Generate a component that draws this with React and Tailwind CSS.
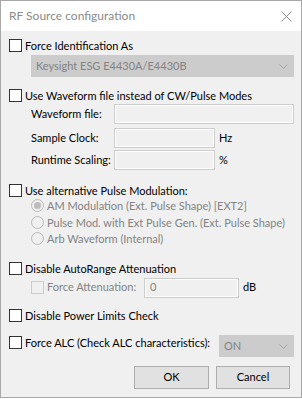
import React from "react";

const FONT = { fontFamily: 'Lato, "Liberation Sans", sans-serif' };

function Check({ disabled }) {
  return (
    <span
      className={`w-[13px] h-[13px] shrink-0 border ${
        disabled ? "border-[#cccccc] bg-[#f0f0f0]" : "border-[#333333] bg-white"
      }`}
    />
  );
}

function Radio({ checked }) {
  return (
    <span className="w-[13px] h-[13px] shrink-0 rounded-full border border-[#bcbcbc] bg-[#f0f0f0] flex items-center justify-center">
      {checked && <span className="w-[7px] h-[7px] rounded-full bg-[#bcbcbc]" />}
    </span>
  );
}

function CheckRow({ label, className = "" }) {
  return (
    <div className={`flex items-center h-[13px] gap-[3px] ${className}`}>
      <Check />
      <span className="text-[11px] leading-[13px] text-black whitespace-nowrap">{label}</span>
    </div>
  );
}

function Chevron() {
  return (
    <svg width="9" height="5" viewBox="0 0 9 5" className="shrink-0">
      <path d="M0.5 0.5 L4.5 4.5 L8.5 0.5" fill="none" stroke="#a8a8a8" strokeWidth="1" />
    </svg>
  );
}

function Combo({ value, className = "" }) {
  return (
    <div
      className={`h-[22px] flex items-center justify-between bg-[#cccccc] border border-[#cccccc] pl-[4px] pr-[5px] ${className}`}
    >
      <span className="text-[11px] text-[#838383] whitespace-nowrap">{value}</span>
      <Chevron />
    </div>
  );
}

function Field({ value = "", className = "" }) {
  return (
    <div
      className={`h-[20px] shrink-0 border border-[#cccccc] shadow-[inset_0_0_0_1px_#ffffff] bg-[#f0f0f0] flex items-center pl-[5px] text-[11px] text-[#838383] ${className}`}
    >
      {value}
    </div>
  );
}

function FieldRow({ label, unit, wide, className = "" }) {
  return (
    <div className={`flex items-center h-[20px] pl-[22px] ${className}`}>
      <span className="w-[83px] shrink-0 text-[11px] text-black whitespace-nowrap">{label}</span>
      <Field className={wide ? "w-[180px]" : "w-[101px]"} />
      {unit && <span className="ml-[4px] text-[11px] text-black">{unit}</span>}
    </div>
  );
}

function RadioRow({ label, checked, className = "" }) {
  return (
    <div className={`flex items-center h-[13px] gap-[3px] pl-[22px] ${className}`}>
      <Radio checked={checked} />
      <span className="text-[11px] leading-[13px] text-[#838383] whitespace-nowrap">{label}</span>
    </div>
  );
}

export default function App() {
  return (
    <div className="w-[302px] h-[399px] bg-white" style={FONT}>
      <div className="w-[302px] h-[398px] border border-[#a8a8a8] flex flex-col">
        <div className="h-[30px] bg-white flex items-center justify-between pl-[8px] pr-[9px] shrink-0">
          <span className="text-[12px] text-[#8a8a8a]">RF Source configuration</span>
          <svg width="11" height="11" viewBox="0 0 11 11">
            <path d="M0.5 0.5 L10.5 10.5 M10.5 0.5 L0.5 10.5" stroke="#8a8a8a" strokeWidth="1" />
          </svg>
        </div>
        <div className="flex-1 bg-[#f0f0f0] flex flex-col pl-[8px]">
          <CheckRow label="Force Identification As" className="mt-[8px]" />
          <Combo value="Keysight ESG E4430A/E4430B" className="mt-[3px] ml-[22px] w-[263px]" />

          <CheckRow label="Use Waveform file instead of CW/Pulse Modes" className="mt-[12px]" />
          <FieldRow label="Waveform file:" wide className="mt-[2px]" />
          <FieldRow label="Sample Clock:" unit="Hz" className="mt-[4px]" />
          <FieldRow label="Runtime Scaling:" unit="%" className="mt-[2px]" />

          <CheckRow label="Use alternative Pulse Modulation:" className="mt-[14px]" />
          <RadioRow label="AM Modulation (Ext. Pulse Shape) [EXT2]" checked className="mt-[2px]" />
          <RadioRow label="Pulse Mod. with Ext Pulse Gen. (Ext. Pulse Shape)" className="mt-[4px]" />
          <RadioRow label="Arb Waveform (Internal)" className="mt-[3px]" />

          <CheckRow label="Disable AutoRange Attenuation" className="mt-[17px]" />
          <div className="flex items-center h-[19px] mt-[3px] pl-[22px]">
            <Check disabled />
            <span className="ml-[3px] w-[97px] shrink-0 text-[11px] text-[#838383] whitespace-nowrap">
              Force Attenuation:
            </span>
            <Field value="0" className="w-[95px] h-[19px]" />
            <span className="ml-[4px] text-[11px] text-black">dB</span>
          </div>

          <CheckRow label="Disable Power Limits Check" className="mt-[12px]" />

          <div className="flex items-start h-[22px] mt-[13px]">
            <div className="flex items-center h-[13px] gap-[3px] mt-[1px] w-[210px] shrink-0">
              <Check />
              <span className="text-[11px] leading-[13px] text-black whitespace-nowrap">
                Force ALC (Check ALC characteristics):
              </span>
            </div>
            <Combo value="ON" className="w-[75px]" />
          </div>

          <div className="flex justify-end gap-[7px] mt-[9px] pr-[11px]">
            <button className="w-[75px] h-[23px] bg-[#e1e1e1] border border-[#adadad] text-[11px] text-black">
              OK
            </button>
            <button className="w-[74px] h-[23px] bg-[#e1e1e1] border border-[#adadad] text-[11px] text-black">
              Cancel
            </button>
          </div>
        </div>
      </div>
    </div>
  );
}
